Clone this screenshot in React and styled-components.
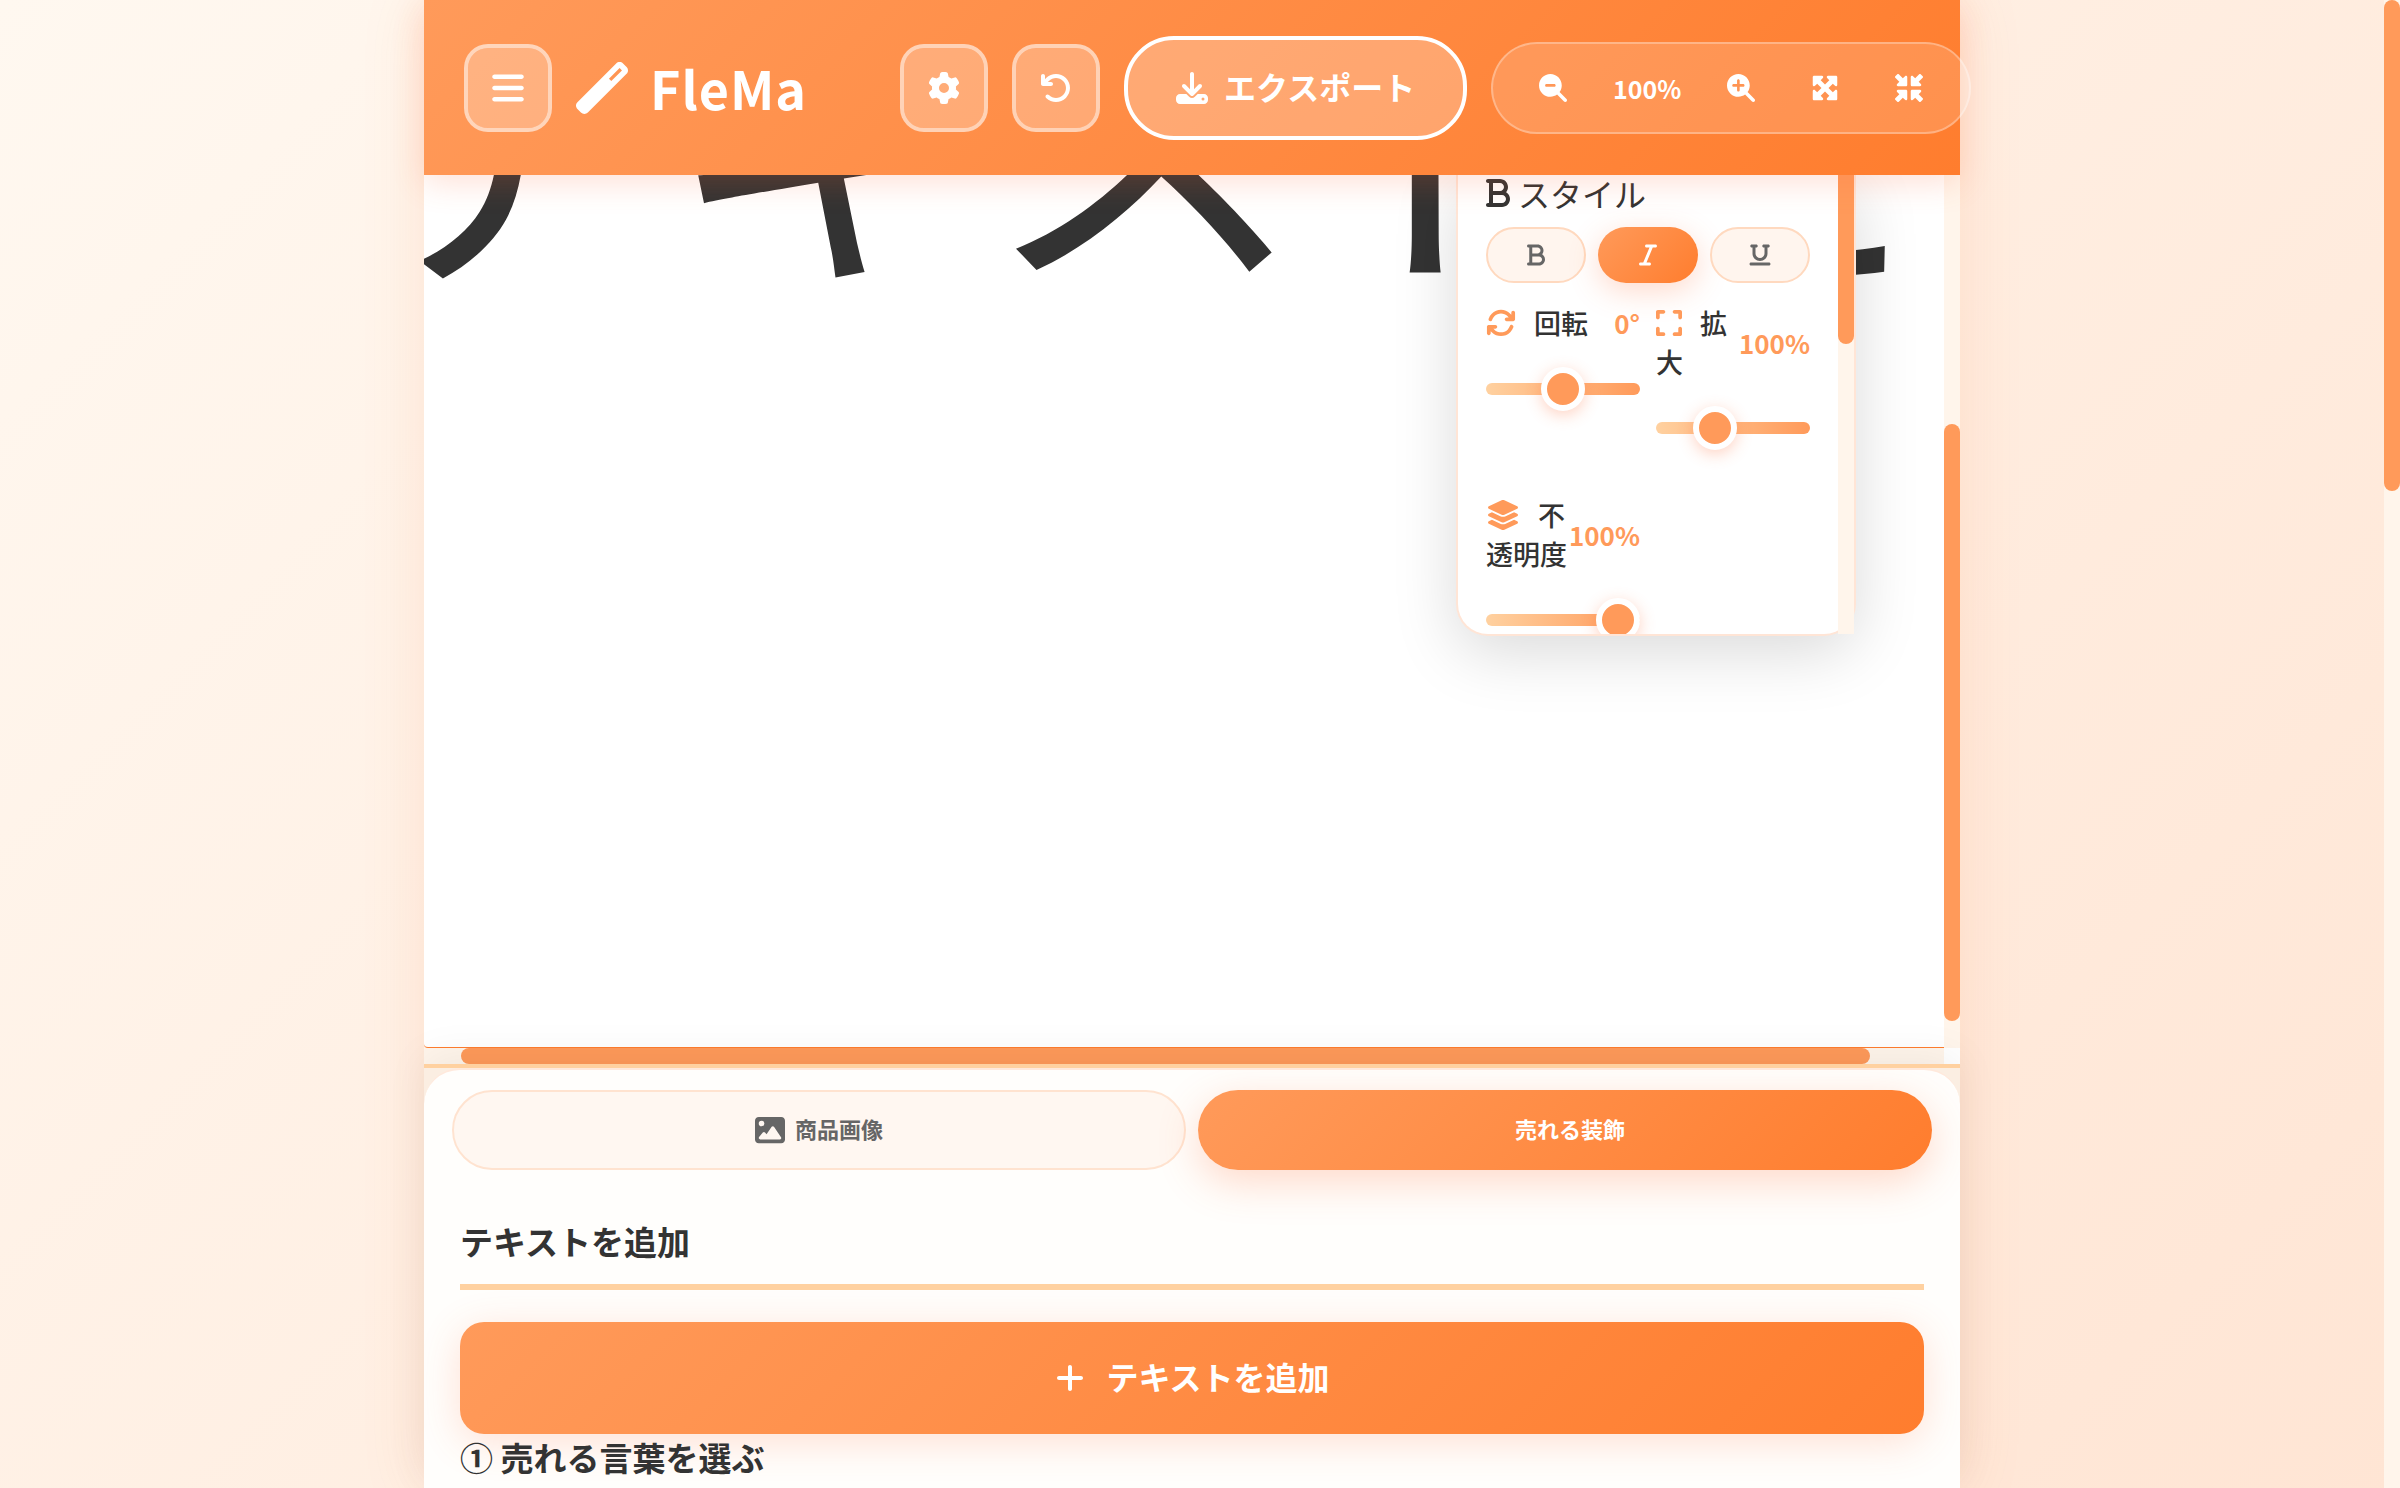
import React, { useState } from "react";
import styled, { createGlobalStyle, css } from "styled-components";
import {
  FaBars,
  FaWandMagic,
  FaGear,
  FaArrowRotateLeft,
  FaDownload,
  FaMagnifyingGlassMinus,
  FaMagnifyingGlassPlus,
  FaMaximize,
  FaMinimize,
  FaBold,
  FaItalic,
  FaUnderline,
  FaArrowsRotate,
  FaExpand,
  FaLayerGroup,
  FaImage,
  FaPlus,
} from "react-icons/fa6";

const color = {
  primary: "#ff9a5a",
  strong: "#ff7d2e",
  soft: "#ffd1a0",
  track: "#fff5eb",
  line: "#ffe5d6",
  text: "#333333",
  muted: "#666666",
};
const gradient = `linear-gradient(135deg, ${color.primary} 0%, ${color.strong} 100%)`;

const GlobalStyle = createGlobalStyle`
  *, *::before, *::after { box-sizing: border-box; }
  body {
    margin: 0;
    color: ${color.text};
    font-family: "Noto Sans CJK JP", "Noto Sans", sans-serif;
  }
  button, input { font-family: inherit; margin: 0; }
  button { cursor: pointer; }
  svg { flex: none; }
`;

const Page = styled.div`
  display: grid;
  grid-template-columns: 1fr 16px;
  height: 100vh;
  overflow: hidden;
  background: linear-gradient(135deg, #fff8f0 0%, #ffe5d4 100%);
`;

const Shell = styled.div`
  display: flex;
  flex-direction: column;
  width: 100%;
  max-width: 1536px;
  min-height: 0;
  margin: 0 auto;
  background: ${color.track};
  box-shadow: 0 0 60px rgba(240, 120, 60, 0.14);
`;

const ScrollTrack = styled.div`
  display: flex;
  flex-direction: ${(p) => (p.$horizontal ? "row" : "column")};
  background: ${color.track};
`;

const ScrollThumb = styled.div`
  flex: 0 0 ${(p) => p.$size};
  margin: ${(p) => p.$inset || "0"};
  border-radius: ${(p) => p.$radius || "8px"};
  background: ${color.primary};
`;

const Caption = styled.span`
  padding-bottom: 4px;
`;

/* ---------- header ---------- */

const Header = styled.header`
  position: relative;
  z-index: 3;
  display: flex;
  align-items: center;
  flex: none;
  gap: 93px;
  height: 175px;
  padding: 0 40px;
  background: ${gradient};
  box-shadow: 0 8px 30px rgba(255, 107, 53, 0.2);
`;

const HeaderGroup = styled.div`
  display: flex;
  align-items: center;
  flex: none;
  gap: 24px;
`;

const Brand = styled.h1`
  display: flex;
  align-items: center;
  gap: 22px;
  margin: 0;
  color: #fff;
  font-size: 52px;
  font-weight: 700;
  line-height: 64px;
  letter-spacing: 1px;
`;

const SquareButton = styled.button`
  display: flex;
  align-items: center;
  justify-content: center;
  width: 88px;
  height: 88px;
  padding: 0;
  border: 4px solid rgba(255, 255, 255, 0.6);
  border-radius: 24px;
  background: rgba(255, 255, 255, 0.25);
  background-clip: padding-box;
  color: #fff;
  font-size: 32px;
`;

const ExportButton = styled.button`
  display: flex;
  align-items: center;
  gap: 16px;
  height: 104px;
  padding: 0 48px;
  border: 4px solid #fff;
  border-radius: 50px;
  background: rgba(255, 255, 255, 0.25);
  color: #fff;
  font-size: 32px;
  font-weight: 600;
`;

const ZoomGroup = styled.div`
  display: flex;
  align-items: center;
  gap: 12px;
  height: 92px;
  padding: 0 24px;
  border: 2px solid rgba(255, 255, 255, 0.4);
  border-radius: 46px;
  background: rgba(255, 255, 255, 0.15);
  background-clip: padding-box;
  color: #fff;
`;

const ZoomButton = styled.button`
  display: flex;
  align-items: center;
  justify-content: center;
  width: 72px;
  height: 72px;
  padding: 0;
  border: 0;
  background: transparent;
  color: inherit;
  font-size: 28px;
`;

const ZoomValue = styled.span`
  width: 92px;
  text-align: center;
  font-size: 25px;
  font-weight: 600;
`;

/* ---------- canvas ---------- */

const Workspace = styled.main`
  position: relative;
  display: grid;
  grid-template-columns: 1fr 16px;
  grid-template-rows: 1fr 16px;
  flex: 0 0 889px;
  overflow: hidden;
`;

const Artboard = styled.div`
  position: relative;
  overflow: hidden;
  border-bottom: 1px solid ${color.strong};
  border-radius: 0 0 0 4px;
  background: #fff;
`;

const ArtText = styled.div`
  position: absolute;
  left: -80px;
  top: -283px;
  white-space: nowrap;
  font-size: 320px;
  font-kerning: none;
  line-height: 464px;
`;

const ScrollCorner = styled.div`
  background: #fff;
`;

const StylePanel = styled.aside`
  position: absolute;
  top: 0;
  right: 104px;
  display: grid;
  grid-template-columns: 1fr 16px;
  width: 400px;
  height: 461px;
  border: 2px solid ${color.line};
  border-top: 0;
  border-radius: 0 0 32px 32px;
  background: #fff;
  box-shadow: 0 16px 64px rgba(0, 0, 0, 0.15);
`;

const StyleBody = styled.div`
  overflow: hidden;
  padding: 0 28px;
  border-radius: 0 0 0 30px;
`;

const StyleTitle = styled.h2`
  display: flex;
  align-items: center;
  gap: 8px;
  margin: 0 0 16px;
  font-size: 32px;
  font-weight: 400;
  line-height: 36px;
  svg {
    width: 24px;
  }
`;

const Toggles = styled.div`
  display: grid;
  grid-template-columns: repeat(3, 1fr);
  gap: 12px;
`;

const Toggle = styled.button`
  display: flex;
  align-items: center;
  justify-content: center;
  height: 56px;
  padding: 0;
  border: 2px solid #ffd9bf;
  border-radius: 28px;
  background: #fff5ee;
  color: ${color.muted};
  font-size: 24px;
  ${(p) =>
    p.$on &&
    css`
      border: 0;
      background: ${gradient};
      color: #fff;
      box-shadow: 0 8px 30px rgba(255, 107, 53, 0.25);
    `}
`;

const Controls = styled.div`
  display: grid;
  grid-template-columns: repeat(2, 1fr);
  gap: 45px 16px;
  margin-top: 20px;
`;

const ControlHead = styled.div`
  display: flex;
  align-items: center;
  justify-content: space-between;
  margin-bottom: 25px;
  line-height: 39px;
`;

const ControlLabel = styled.label`
  font-size: 27px;
  font-weight: 500;
  svg {
    display: inline-block;
    width: ${(p) => p.$iconWidth};
    height: 30px;
    margin-right: 12px;
    color: ${color.primary};
    vertical-align: -4px;
  }
`;

const ControlValue = styled.output`
  color: ${color.primary};
  font-size: 26px;
  font-weight: 600;
`;

const Slider = styled.input`
  display: block;
  width: 100%;
  height: 44px;
  appearance: none;
  background: transparent;
  &::-webkit-slider-runnable-track {
    height: 12px;
    border-radius: 6px;
    background: linear-gradient(90deg, ${color.soft}, ${color.primary});
  }
  &::-webkit-slider-thumb {
    appearance: none;
    width: 44px;
    height: 44px;
    margin-top: -16px;
    border: 6px solid #fff;
    border-radius: 50%;
    background: ${color.primary};
    box-shadow: 0 4px 16px rgba(255, 107, 53, 0.3);
  }
`;

/* ---------- bottom panel ---------- */

const Dock = styled.section`
  position: relative;
  z-index: 2;
  flex: 1 0 0;
  min-height: 0;
  border-top: 4px solid ${color.soft};
  background: #fbeee2;
  box-shadow: 0 -8px 40px rgba(0, 0, 0, 0.06);
`;

const DockBody = styled.div`
  height: 100%;
  overflow: hidden;
  border-top: 2px solid #ffe9dc;
  border-radius: 36px 36px 0 0;
  background: #fffefc;
`;

const Tabs = styled.div`
  display: grid;
  grid-template-columns: repeat(2, 1fr);
  gap: 12px;
  padding: 20px 28px 0;
`;

const Tab = styled.button`
  display: flex;
  align-items: center;
  justify-content: center;
  gap: 10px;
  height: 80px;
  border: 2px solid #ffe3d0;
  border-radius: 40px;
  background: #fff7f1;
  color: ${color.muted};
  font-size: 22px;
  font-weight: 600;
  ${(p) =>
    p.$on &&
    css`
      border: 0;
      background: ${gradient};
      color: #fff;
      box-shadow: 0 12px 40px rgba(255, 107, 53, 0.25);
    `}
`;

const TabIcon = styled.span`
  display: flex;
  font-size: 30px;
`;

const Section = styled.div`
  padding: 48px 36px 0;
`;

const SectionTitle = styled.h3`
  margin: 0;
  font-size: 33px;
  font-weight: 700;
  line-height: 46px;
  ${(p) =>
    p.$ruled &&
    css`
      margin-bottom: 32px;
      padding-bottom: 20px;
      border-bottom: 6px solid ${color.soft};
    `}
`;

const AddButton = styled.button`
  display: flex;
  align-items: center;
  justify-content: center;
  gap: 20px;
  width: 100%;
  height: 112px;
  border: 0;
  border-radius: 24px;
  background: ${gradient};
  color: #fff;
  font-size: 32px;
  font-weight: 600;
  box-shadow: 0 8px 40px rgba(255, 107, 53, 0.2);
`;

function Control({ id, icon, iconWidth, name, unit, min, max, start }) {
  const [value, setValue] = useState(start);
  return (
    <div>
      <ControlHead>
        <ControlLabel htmlFor={id} $iconWidth={iconWidth}>
          {icon} {name}
        </ControlLabel>
        <ControlValue htmlFor={id}>
          {value}
          {unit}
        </ControlValue>
      </ControlHead>
      <Slider
        id={id}
        type="range"
        min={min}
        max={max}
        value={value}
        onChange={(e) => setValue(Number(e.target.value))}
      />
    </div>
  );
}

const toggles = [
  { key: "bold", label: "太字", Icon: FaBold },
  { key: "italic", label: "斜体", Icon: FaItalic },
  { key: "underline", label: "下線", Icon: FaUnderline },
];

const controls = [
  { id: "rotate", icon: <FaArrowsRotate />, iconWidth: "30px", name: "回転", unit: "°", min: -180, max: 180, start: 0 },
  { id: "scale", icon: <FaExpand />, iconWidth: "26px", name: "拡大", unit: "%", min: 50, max: 200, start: 100 },
  { id: "opacity", icon: <FaLayerGroup />, iconWidth: "34px", name: "不透明度", unit: "%", min: 0, max: 100, start: 100 },
];

const tabs = [
  { key: "image", label: "商品画像", icon: <FaImage /> },
  { key: "decor", label: "売れる装飾", icon: null },
];

export default function App() {
  const [style, setStyle] = useState("italic");
  const [tab, setTab] = useState("decor");
  return (
    <Page>
      <GlobalStyle />
      <Shell>
        <Header>
          <HeaderGroup>
            <SquareButton aria-label="メニュー">
              <FaBars size={36} />
            </SquareButton>
            <Brand>
              <FaWandMagic />
              FleMa
            </Brand>
          </HeaderGroup>
          <HeaderGroup>
            <SquareButton aria-label="設定">
              <FaGear />
            </SquareButton>
            <SquareButton aria-label="元に戻す">
              <FaArrowRotateLeft />
            </SquareButton>
            <ExportButton>
              <FaDownload />
              <Caption>エクスポート</Caption>
            </ExportButton>
            <ZoomGroup>
              <ZoomButton aria-label="縮小">
                <FaMagnifyingGlassMinus />
              </ZoomButton>
              <ZoomValue>100%</ZoomValue>
              <ZoomButton aria-label="拡大">
                <FaMagnifyingGlassPlus />
              </ZoomButton>
              <ZoomButton aria-label="全体表示">
                <FaMaximize />
              </ZoomButton>
              <ZoomButton aria-label="元のサイズ">
                <FaMinimize />
              </ZoomButton>
            </ZoomGroup>
          </HeaderGroup>
        </Header>

        <Workspace>
          <Artboard>
            <ArtText>テキストを</ArtText>
          </Artboard>
          <ScrollTrack>
            <ScrollThumb $size="597px" $inset="249px 0 0" />
          </ScrollTrack>
          <ScrollTrack $horizontal>
            <ScrollThumb $size="1409px" $inset="0 0 0 37px" />
          </ScrollTrack>
          <ScrollCorner />
          <StylePanel>
            <StyleBody>
              <StyleTitle>
                <FaBold />
                スタイル
              </StyleTitle>
              <Toggles>
                {toggles.map(({ key, label, Icon }) => (
                  <Toggle
                    key={key}
                    aria-label={label}
                    aria-pressed={style === key}
                    $on={style === key}
                    onClick={() => setStyle(key)}
                  >
                    <Icon />
                  </Toggle>
                ))}
              </Toggles>
              <Controls>
                {controls.map((control) => (
                  <Control key={control.id} {...control} />
                ))}
              </Controls>
            </StyleBody>
            <ScrollTrack>
              <ScrollThumb $size="169px" $radius="0 0 8px 8px" />
            </ScrollTrack>
          </StylePanel>
        </Workspace>

        <Dock>
          <DockBody>
            <Tabs>
              {tabs.map(({ key, label, icon }) => (
                <Tab key={key} $on={tab === key} onClick={() => setTab(key)}>
                  <TabIcon>{icon}</TabIcon>
                  <Caption>{label}</Caption>
                </Tab>
              ))}
            </Tabs>
            <Section>
              <SectionTitle $ruled>テキストを追加</SectionTitle>
              <AddButton>
                <FaPlus />
                <Caption>テキストを追加</Caption>
              </AddButton>
              <SectionTitle>① 売れる言葉を選ぶ</SectionTitle>
            </Section>
          </DockBody>
        </Dock>
      </Shell>
      <ScrollTrack>
        <ScrollThumb $size="491px" />
      </ScrollTrack>
    </Page>
  );
}
